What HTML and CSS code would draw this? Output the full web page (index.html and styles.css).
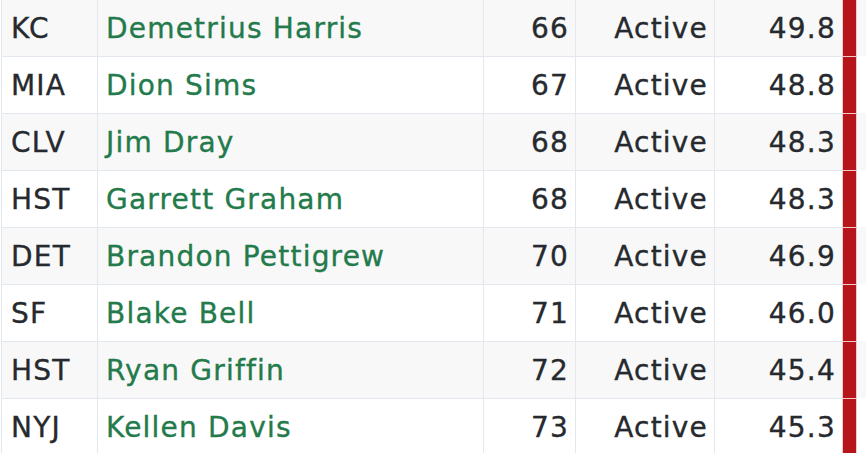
FILE: index.html
```html
<!DOCTYPE html>
<html>
<head>
<meta charset="utf-8">
<link rel="stylesheet" href="styles.css">
</head>
<body>
<div class="table">
  <div class="row stripe"><div class="c team">KC</div><div class="c name">Demetrius Harris</div><div class="c num">66</div><div class="c status">Active</div><div class="c val">49.8</div><div class="c bar"></div></div>
  <div class="row"><div class="c team">MIA</div><div class="c name">Dion Sims</div><div class="c num">67</div><div class="c status">Active</div><div class="c val">48.8</div><div class="c bar"></div></div>
  <div class="row stripe"><div class="c team">CLV</div><div class="c name">Jim Dray</div><div class="c num">68</div><div class="c status">Active</div><div class="c val">48.3</div><div class="c bar"></div></div>
  <div class="row"><div class="c team">HST</div><div class="c name">Garrett Graham</div><div class="c num">68</div><div class="c status">Active</div><div class="c val">48.3</div><div class="c bar"></div></div>
  <div class="row stripe"><div class="c team">DET</div><div class="c name">Brandon Pettigrew</div><div class="c num">70</div><div class="c status">Active</div><div class="c val">46.9</div><div class="c bar"></div></div>
  <div class="row"><div class="c team">SF</div><div class="c name">Blake Bell</div><div class="c num">71</div><div class="c status">Active</div><div class="c val">46.0</div><div class="c bar"></div></div>
  <div class="row stripe"><div class="c team">HST</div><div class="c name">Ryan Griffin</div><div class="c num">72</div><div class="c status">Active</div><div class="c val">45.4</div><div class="c bar"></div></div>
  <div class="row"><div class="c team">NYJ</div><div class="c name">Kellen Davis</div><div class="c num">73</div><div class="c status">Active</div><div class="c val">45.3</div><div class="c bar"></div></div>
</div>
</body>
</html>
```
FILE: styles.css
```css
html, body {
  margin: 0;
  padding: 0;
  background: #ffffff;
  overflow: hidden;
}
.table {
  margin-top: -1px;
  margin-left: 1px;
  font-family: "DejaVu Sans", "Open Sans", sans-serif;
  font-size: 28px;
  letter-spacing: 1.2px;
  -webkit-text-stroke: 0.35px currentColor;
  color: #26292e;
}
.row {
  display: grid;
  grid-template-columns: 96px 386px 92px 139px 128px 15px;
  height: 57px;
  box-sizing: border-box;
  background: #ffffff;
}
.row.stripe {
  background: #f8f8f8;
}
.c {
  border-top: 1px solid #e3e8ef;
  border-left: 1px solid #e3e8ef;
  display: flex;
  align-items: center;
  padding: 0 6px 0 8px;
  white-space: nowrap;
  box-sizing: border-box;
}
.team {
  padding-left: 9px;
}
.name {
  color: #237a4b;
  padding-left: 8px;
}
.num, .status, .val {
  justify-content: flex-end;
}
.bar {
  background: #b5161b;
  border-top-color: #f1c9ca;
  border-left-color: #f1c9ca;
  border-right: 1px solid #f1c9ca;
  padding: 0;
}
```
